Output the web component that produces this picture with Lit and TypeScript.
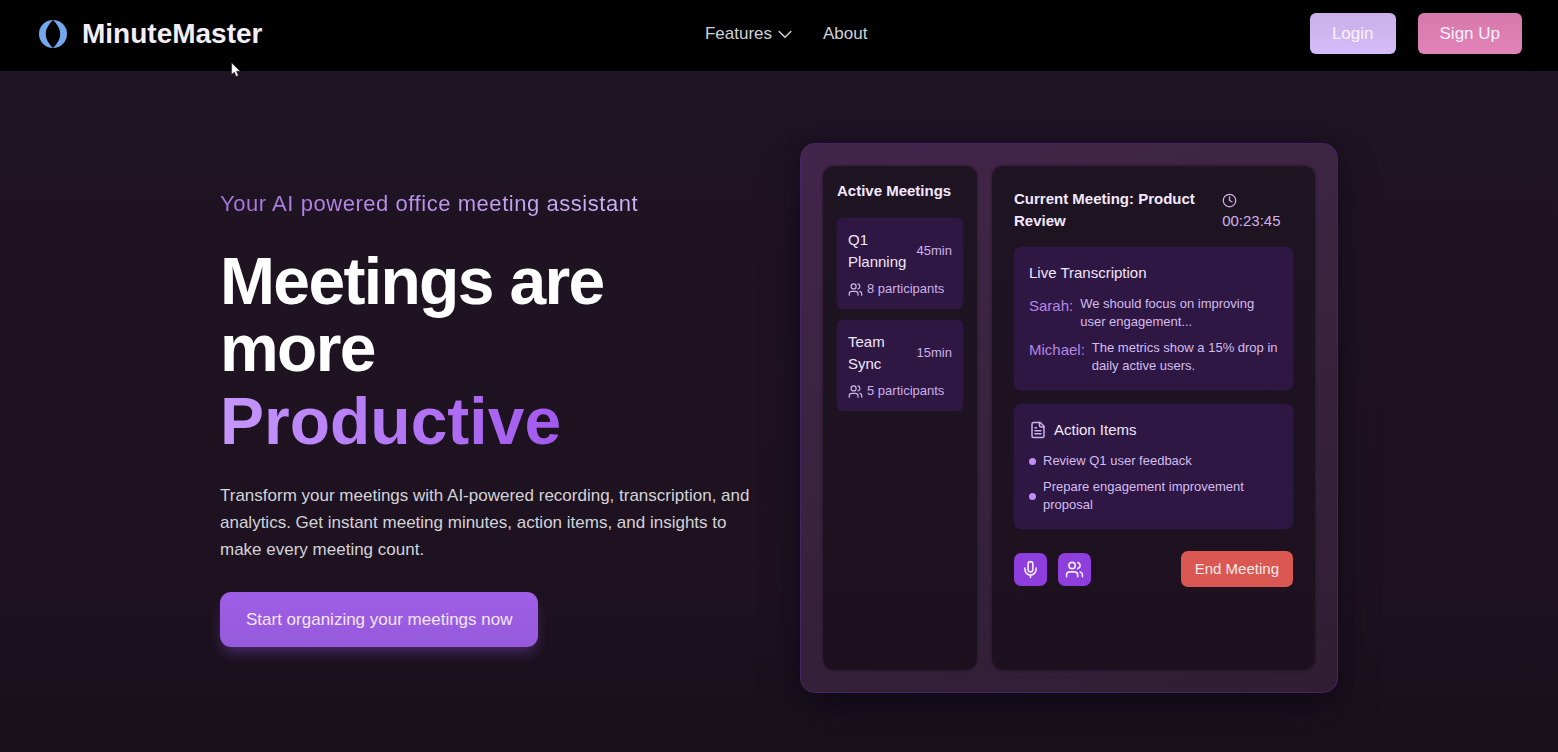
import { LitElement, html, css, svg } from "lit";
import { customElement, property } from "lit/decorators.js";

const ICONS = {
  chevron: svg`<path d="m19 9-7 7-7-7"/>`,
  users: svg`<path d="M16 21v-2a4 4 0 0 0-4-4H6a4 4 0 0 0-4 4v2"/><circle cx="9" cy="7" r="4"/><path d="M22 21v-2a4 4 0 0 0-3-3.87"/><path d="M16 3.13a4 4 0 0 1 0 7.75"/>`,
  clock: svg`<circle cx="12" cy="12" r="10"/><path d="M12 6v6l4 2"/>`,
  file: svg`<path d="M15 2H6a2 2 0 0 0-2 2v16a2 2 0 0 0 2 2h12a2 2 0 0 0 2-2V7Z"/><path d="M14 2v4a2 2 0 0 0 2 2h4"/><path d="M10 9H8"/><path d="M16 13H8"/><path d="M16 17H8"/>`,
  mic: svg`<path d="M12 2a3 3 0 0 0-3 3v7a3 3 0 0 0 6 0V5a3 3 0 0 0-3-3Z"/><path d="M19 10v2a7 7 0 0 1-14 0v-2"/><path d="M12 19v3"/>`,
};

function icon(name: keyof typeof ICONS, cls: string) {
  return html`<svg class=${cls} viewBox="0 0 24 24" fill="none" stroke="currentColor" stroke-width="2" stroke-linecap="round" stroke-linejoin="round" aria-hidden="true">${ICONS[name]}</svg>`;
}

@customElement("site-header")
class SiteHeader extends LitElement {
  static styles = css`
    :host { display: block; }
    .bar {
      display: flex; align-items: center; justify-content: space-between;
      padding: 13px 36px 17px; background: #000;
    }
    .brand { display: flex; align-items: center; gap: 14px; color: #f3eef5; text-decoration: none; }
    .logo { width: 32px; height: 32px; display: block; }
    .name { font-size: 28px; line-height: 36px; font-weight: 700; }
    .nav { display: flex; align-items: center; gap: 28px; }
    .link {
      display: flex; align-items: center; gap: 3px; padding: 0; border: 0; background: none;
      color: #cfd2d8; font: 17px/26px "Liberation Sans", Arial, sans-serif; text-decoration: none;
    }
    .chevron { width: 20px; height: 20px; stroke-width: 1.8; }
    .actions { display: flex; gap: 22px; }
    .btn {
      height: 41px; padding: 0 22px; border: 0; border-radius: 6px; color: #faf2fc;
      font: 17px/26px "Liberation Sans", Arial, sans-serif;
    }
    .login { background: linear-gradient(#cab0ea, #d6bcf8); }
    .signup { background: linear-gradient(#d879ad, #e182b8); }
  `;

  render() {
    return html`
      <header class="bar">
        <a class="brand" href="#">
          <svg class="logo" viewBox="0 0 32 32" aria-hidden="true">
            <path fill="#74a8ee" d="M17 2A14 14 0 0 0 17 30C13 26 9.800 21.500 9.800 16S13 6 17 2Z"/>
            <path fill="#74a8ee" d="M17 2A14 14 0 0 1 17 30C21 26 24.200 21.500 24.200 16S21 6 17 2Z"/>
          </svg>
          <span class="name">MinuteMaster</span>
        </a>
        <nav class="nav">
          <button class="link" type="button">Features ${icon("chevron", "chevron")}</button>
          <a class="link" href="#about">About</a>
        </nav>
        <div class="actions">
          <button class="btn login" type="button">Login</button>
          <button class="btn signup" type="button">Sign Up</button>
        </div>
      </header>
    `;
  }
}

@customElement("meeting-item")
class MeetingItem extends LitElement {
  @property() name = "";
  @property() length = "";
  @property({ type: Number }) people = 0;

  static styles = css`
    :host { display: block; }
    .item { padding: 11px; border-radius: 6px; background: #2e1742; box-shadow: 0 0 2px #2e1742; }
    .top { display: flex; align-items: center; justify-content: space-between; margin-bottom: 7px; }
    .title { font-size: 15px; line-height: 22px; color: #f0e6fb; }
    .length { font-size: 13px; line-height: 18px; color: #cdb2ea; }
    .people { display: flex; align-items: center; gap: 4px; font-size: 13px; line-height: 18px; color: #cdb2ea; }
    .small { width: 15px; height: 15px; flex: none; }
  `;

  render() {
    return html`
      <div class="item">
        <div class="top">
          <span class="title">${this.name}</span>
          <span class="length">${this.length}</span>
        </div>
        <div class="people">${icon("users", "small")}<span>${this.people} participants</span></div>
      </div>
    `;
  }
}

@customElement("meeting-preview")
class MeetingPreview extends LitElement {
  static styles = css`
    :host { display: block; }
    .card {
      box-sizing: border-box; min-height: 550px; padding: 22px;
      display: grid; grid-template-columns: repeat(3, minmax(0, 1fr)); gap: 15px;
      border: 1px solid #48226a; border-radius: 15px;
      background: linear-gradient(160deg, #43254b 0%, #3b2441 35%, #301d33 100%);
      box-shadow: 0 22px 44px -8px rgba(10, 8, 20, 0.6), 0 0 14px rgba(16, 10, 26, 0.5);
    }
    .panel { border-radius: 11px; background: linear-gradient(#1e1422, #1e111f); box-shadow: 0 0 3px #1e1422; }
    .side { padding: 14px; }
    .main { grid-column: span 2; padding: 22px; }
    h2, h3, p, ul { margin: 0; padding: 0; }
    h2 { font-size: 15px; line-height: 22px; font-weight: 700; color: #f3e8ff; }
    h3 { font-size: 15px; line-height: 22px; font-weight: 400; color: #f0e6fb; }
    .list { display: grid; gap: 11px; margin-top: 16px; }
    .head { display: flex; align-items: center; justify-content: space-between; margin-bottom: 15px; }
    .time { font-size: 15px; line-height: 22px; color: #cdb2ea; }
    .clock { width: 15px; height: 15px; vertical-align: middle; margin-right: 3px; }
    .box { padding: 15px; border-radius: 7px; background: #2e1742; box-shadow: 0 0 2px #2e1742; margin-bottom: 14px; }
    .rows { display: grid; gap: 8px; margin-top: 11px; list-style: none; }
    .row { display: flex; align-items: flex-start; gap: 7px; }
    .who { font-size: 15px; line-height: 22px; color: #b585e8; }
    .text { font-size: 13px; line-height: 18px; color: #d3bdf0; }
    .title { display: flex; align-items: center; gap: 7px; }
    .file { width: 18px; height: 18px; color: #cdb2ea; }
    .todo { display: flex; align-items: center; gap: 7px; }
    .dot { flex: none; width: 7px; height: 7px; border-radius: 50%; background: #be8ef6; }
    .foot { display: flex; align-items: center; justify-content: space-between; margin-top: 22px; }
    .tools { display: flex; gap: 11px; }
    .tool {
      display: grid; place-items: center; width: 33px; height: 33px; padding: 0;
      border: 0; border-radius: 7px; background: #8d3edc; color: #f5ecfd;
    }
    .glyph { width: 19px; height: 19px; }
    .end {
      padding: 7px 14px; border: 0; border-radius: 7px; background: #db5852; color: #fbeaec;
      font: 15px/22px "Liberation Sans", Arial, sans-serif;
    }
  `;

  render() {
    const lines = [
      ["Sarah:", "We should focus on improving user engagement..."],
      ["Michael:", "The metrics show a 15% drop in daily active users."],
    ];
    const todos = ["Review Q1 user feedback", "Prepare engagement improvement proposal"];
    return html`
      <div class="card">
        <section class="panel side">
          <h2>Active Meetings</h2>
          <div class="list">
            <meeting-item name="Q1 Planning" length="45min" people="8"></meeting-item>
            <meeting-item name="Team Sync" length="15min" people="5"></meeting-item>
          </div>
        </section>
        <section class="panel main">
          <div class="head">
            <h2>Current Meeting: Product Review</h2>
            <span class="time">${icon("clock", "clock")} 00:23:45</span>
          </div>
          <div class="box">
            <h3>Live Transcription</h3>
            <div class="rows">
              ${lines.map(([who, text]) => html`<div class="row"><span class="who">${who}</span><p class="text">${text}</p></div>`)}
            </div>
          </div>
          <div class="box">
            <h3 class="title">${icon("file", "file")}<span>Action Items</span></h3>
            <ul class="rows">
              ${todos.map((t) => html`<li class="todo"><span class="dot"></span><span class="text">${t}</span></li>`)}
            </ul>
          </div>
          <div class="foot">
            <div class="tools">
              <button class="tool" type="button" aria-label="Microphone">${icon("mic", "glyph")}</button>
              <button class="tool" type="button" aria-label="Participants">${icon("users", "glyph")}</button>
            </div>
            <button class="end" type="button">End Meeting</button>
          </div>
        </section>
      </div>
    `;
  }
}

@customElement("app-root")
class AppRoot extends LitElement {
  static styles = css`
    :host {
      display: block; position: relative; min-height: 100vh; box-sizing: border-box;
      font-family: "Liberation Sans", Arial, sans-serif;
      background: linear-gradient(#1f1423 0%, #1e1220 75%, #19101b 100%);
    }
    .hero {
      display: grid; grid-template-columns: repeat(2, minmax(0, 1fr)); gap: 42px; align-items: center;
      max-width: 1118px; margin: 0 auto; padding: 72px 22px 58px;
    }
    .tagline {
      width: fit-content; margin: 0 0 29px; font-size: 22px; line-height: 30px; letter-spacing: 0.025em;
      background: linear-gradient(90deg, #a675de, #d0b4f8); -webkit-background-clip: text; background-clip: text; color: transparent;
    }
    .headline { margin: 0 0 22px; font-size: 66px; line-height: 67px; font-weight: 700; letter-spacing: -0.025em; color: #fff; }
    .accent {
      display: block; width: fit-content; line-height: 78px; letter-spacing: normal;
      background: linear-gradient(90deg, #c597fb, #a259ee); -webkit-background-clip: text; background-clip: text; color: transparent;
    }
    .lead { margin: 0 0 29px; font-size: 17px; line-height: 27px; color: #d3d2d8; }
    .cta {
      height: 55px; padding: 0 26px; border: 0; border-radius: 11px; color: #f2e6fa;
      font: 17px/26px "Liberation Sans", Arial, sans-serif;
      background: linear-gradient(#a05ee7, #955adb); box-shadow: 0 8px 14px -3px rgba(147, 80, 220, 0.4);
    }
    .cursor { position: absolute; left: 231px; top: 62px; width: 12px; height: 16px; }
  `;

  render() {
    return html`
      <site-header></site-header>
      <main class="hero">
        <section>
          <p class="tagline">Your AI powered office meeting assistant</p>
          <h1 class="headline">Meetings are<br />more <span class="accent">Productive</span></h1>
          <p class="lead">
            Transform your meetings with AI-powered recording, transcription, and analytics. Get instant
            meeting minutes, action items, and insights to make every meeting count.
          </p>
          <button class="cta" type="button">Start organizing your meetings now</button>
        </section>
        <meeting-preview></meeting-preview>
      </main>
      <svg class="cursor" viewBox="0 0 12 16" aria-hidden="true">
        <path fill="#fff" stroke="#222" stroke-width=".6" d="M.6.8V12.600L3.300 10.200 5.200 14.500 7.400 13.500 5.500 9.300H9.200Z"/>
      </svg>
    `;
  }
}
